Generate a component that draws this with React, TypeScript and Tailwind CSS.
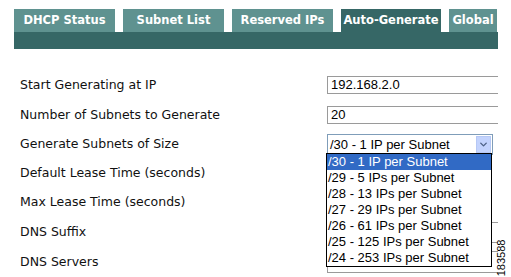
import { ChevronDown } from 'lucide-react'

const tabs = [
  { label: 'DHCP Status', active: false, w: 'w-[101px]' },
  { label: 'Subnet List', active: false, w: 'w-[101px]' },
  { label: 'Reserved IPs', active: false, w: 'w-[101px]' },
  { label: 'Auto-Generate', active: true, w: 'w-[100px]' },
  { label: 'Global', active: false, w: 'w-[48px]' },
]

const sizes = [
  '/30 - 1 IP per Subnet',
  '/29 - 5 IPs per Subnet',
  '/28 - 13 IPs per Subnet',
  '/27 - 29 IPs per Subnet',
  '/26 - 61 IPs per Subnet',
  '/25 - 125 IPs per Subnet',
  '/24 - 253 IPs per Subnet',
]

function TextBox({ value, h = 'h-[18px]', w = 'w-[200px]' }: { value?: string; h?: string; w?: string }) {
  return (
    <div
      className={`${h} ${w} shrink-0 border border-[#9a9a9a] border-r-0 bg-white pl-[3px] flex items-center text-[13px] text-black`}
      style={{ fontFamily: '"Liberation Sans", Arial, sans-serif' }}
    >
      {value}
    </div>
  )
}

export default function App() {
  return (
    <div className="relative w-[511px] h-[277px] bg-white overflow-hidden" style={{ fontFamily: '"DejaVu Sans", Verdana, sans-serif' }}>
      {/* Tabs */}
      <div className="ml-[14px] mt-[9px] w-[484px] overflow-hidden">
        <div className="flex gap-[8px] h-[23px]">
          {tabs.map((t) => (
            <div
              key={t.label}
              className={`${t.w} shrink-0 flex items-center justify-center text-[11.5px] font-bold text-white whitespace-nowrap ${
                t.active ? 'bg-[#366766]' : 'bg-[#5f9290]'
              }`}
            >
              {t.label}
            </div>
          ))}
        </div>
        <div className="h-[17px] bg-[#366766]" />
      </div>

      {/* Form */}
      <div className="relative w-[498px] overflow-hidden pl-[20px] pt-[21px] text-[12.5px] text-[#111]">
        <div className="flex items-center h-[30px]">
          <div className="w-[307px] shrink-0">Start Generating at IP</div>
          <TextBox value="192.168.2.0" />
        </div>
        <div className="flex items-center h-[30px]">
          <div className="w-[307px] shrink-0">Number of Subnets to Generate</div>
          <TextBox value="20" />
        </div>
        <div className="flex items-center h-[29px]">
          <div className="w-[307px] shrink-0">Generate Subnets of Size</div>
          <div
            className="h-[21px] w-[166px] shrink-0 border border-[#7f9db9] bg-white pl-[2px] flex items-center justify-between text-[13px] text-black"
            style={{ fontFamily: '"Liberation Sans", Arial, sans-serif' }}
          >
            <span>/30 - 1 IP per Subnet</span>
            <span className="mr-[1px] h-[17px] w-[15px] bg-[#c3d3fd] border border-[#b6c8f5] flex items-center justify-center">
              <ChevronDown size={11} strokeWidth={3} className="text-[#4d6185]" />
            </span>
          </div>
        </div>
        <div className="flex items-center h-[29px]">
          <div className="w-[307px] shrink-0">Default Lease Time (seconds)</div>
          <TextBox value="" w="w-[150px]" />
        </div>
        <div className="flex items-center h-[29px]">
          <div className="w-[307px] shrink-0">Max Lease Time (seconds)</div>
          <TextBox value="" w="w-[150px]" />
        </div>
        <div className="flex items-center h-[30px]">
          <div className="w-[307px] shrink-0">DNS Suffix</div>
          <TextBox value="" h="h-[21px]" />
        </div>
        <div className="flex items-center h-[30px]">
          <div className="w-[307px] shrink-0">DNS Servers</div>
          <TextBox value="" h="h-[22px]" />
        </div>

        {/* Open dropdown list */}
        <div
          className="absolute left-[326px] top-[104px] w-[166px] border border-black bg-white text-[13px] text-black"
          style={{ fontFamily: '"Liberation Sans", Arial, sans-serif' }}
        >
          {sizes.map((s, i) => (
            <div
              key={s}
              className={`h-[16px] leading-[16px] pl-[1px] whitespace-nowrap ${i === 0 ? 'bg-[#316ac5] text-white' : ''}`}
            >
              {s}
            </div>
          ))}
        </div>
      </div>

      {/* figure number */}
      <div
        className="absolute left-[477px] top-[244px] w-[48px] -rotate-90 text-[11px] text-black"
        style={{ fontFamily: '"Liberation Sans", Arial, sans-serif' }}
      >
        183588
      </div>
    </div>
  )
}
